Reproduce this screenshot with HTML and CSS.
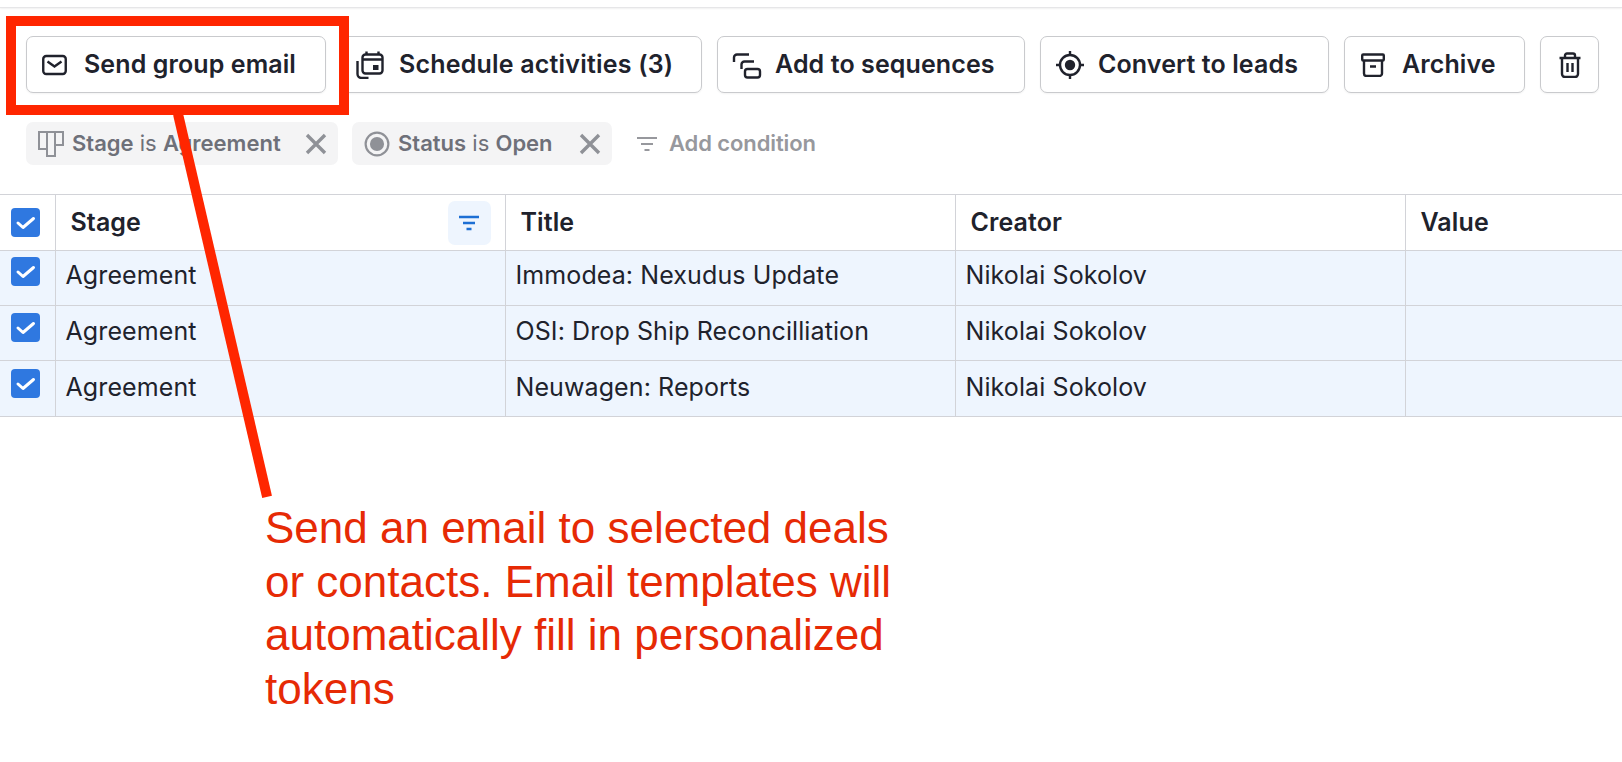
FILE: index.html
```html
<!DOCTYPE html>
<html lang="en">
<head>
    <meta charset="UTF-8">
    <meta name="viewport" content="width=device-width, initial-scale=1.0">
    <title>Deals</title>
    <link rel="stylesheet" href="styles.css">
</head>
<body>
    <div class="topline"></div>
    <div class="actions">
        <button class="btn btn-email">
            <svg class="icon" width="25" height="24" viewBox="0 0 25 24"><rect x="1.250" y="3" width="22.500" height="18" rx="3"/><path d="M5.500 8.500l7 5 7-5"/></svg>
            <span>Send group email</span>
        </button>
        <button class="btn btn-schedule">
            <svg class="icon" width="28" height="28" viewBox="0 0 28 28"><rect x="6.500" y="3.500" width="20" height="19" rx="3"/><path d="M6.500 8.500h20M10.500 .5V4M22.500 .5V4M1.500 10v13a4 4 0 0 0 4 4h7"/><rect x="17" y="14" width="5.500" height="5" class="solid"/></svg>
            <span>Schedule activities (3)</span>
        </button>
        <button class="btn btn-seq">
            <svg class="icon" width="30" height="28" viewBox="0 0 30 28"><path d="M17 3.500H5a3 3 0 0 0-3 3V11"/><path d="M22 10.500H12.500a3 3 0 0 0-3 3V18"/><rect x="13" y="18" width="15" height="8.500" rx="2.500"/></svg>
            <span>Add to sequences</span>
        </button>
        <button class="btn btn-leads">
            <svg class="icon" width="30" height="30" viewBox="0 0 30 30"><circle cx="15" cy="15" r="10"/><circle cx="15" cy="15" r="5.200" class="solid"/><path d="M15 1v4M15 25v4M1 15h4M25 15h4"/></svg>
            <span>Convert to leads</span>
        </button>
        <button class="btn btn-archive">
            <svg class="icon" width="24" height="24" viewBox="0 0 24 24"><rect x="1.200" y="1.500" width="21.600" height="6" rx="1"/><path d="M3 7.500v13a2.500 2.500 0 0 0 2.500 2.500h13a2.500 2.500 0 0 0 2.500-2.500v-13M9 13.500h6"/></svg>
            <span>Archive</span>
        </button>
        <button class="btn btn-trash" aria-label="Delete">
            <svg class="icon" width="24" height="26" viewBox="0 0 24 26"><path d="M1.500 6h21M7 6V3.500a2 2 0 0 1 2-2h6a2 2 0 0 1 2 2V6M4 6v16a3 3 0 0 0 3 3h10a3 3 0 0 0 3-3V6M9.500 11v9M14.500 11v9"/></svg>
        </button>
    </div>

    <div class="filters">
        <div class="chip chip-stage">
            <svg class="chip-icon" viewBox="0 0 26 26"><path d="M1 1h24v13h-8v11H9v-7H1zM9 1v17M17 1v13"/></svg>
            <span class="chip-text"><b>Stage</b> is <b>Agreement</b></span>
            <svg class="chip-x" viewBox="0 0 24 24"><path d="M3 3l18 18M21 3L3 21"/></svg>
        </div>
        <div class="chip chip-status">
            <svg class="chip-icon" viewBox="0 0 24 24"><circle cx="12" cy="12" r="10.500"/><circle cx="12" cy="12" r="6.500" class="chip-dot"/></svg>
            <span class="chip-text"><b>Status</b> is <b>Open</b></span>
            <svg class="chip-x" viewBox="0 0 24 24"><path d="M3 3l18 18M21 3L3 21"/></svg>
        </div>
        <div class="add-condition">
            <svg class="filter-icon" viewBox="0 0 24 24"><path d="M2 6h20M6 12h12M9.500 18h5"/></svg>
            <span>Add condition</span>
        </div>
    </div>

    <table class="deals">
        <thead>
            <tr>
                <th class="col-check"><span class="check"><svg viewBox="0 0 29 29"><path d="M7 15l5 4.500 10.500-9"/></svg></span></th>
                <th class="col-stage">
                    <div class="th-inner">
                        <span class="th-label">Stage</span>
                        <span class="sort"><svg viewBox="0 0 24 24"><path d="M2 6h20M6 12h12M9.500 18h5"/></svg></span>
                    </div>
                </th>
                <th class="col-title">Title</th>
                <th class="col-creator">Creator</th>
                <th class="col-value">Value</th>
            </tr>
        </thead>
        <tbody>
            <tr>
                <td class="col-check"><span class="check"><svg viewBox="0 0 29 29"><path d="M7 15l5 4.500 10.500-9"/></svg></span></td>
                <td>Agreement</td>
                <td>Immodea: Nexudus Update</td>
                <td>Nikolai Sokolov</td>
                <td></td>
            </tr>
            <tr>
                <td class="col-check"><span class="check"><svg viewBox="0 0 29 29"><path d="M7 15l5 4.500 10.500-9"/></svg></span></td>
                <td>Agreement</td>
                <td>OSI: Drop Ship Reconcilliation</td>
                <td>Nikolai Sokolov</td>
                <td></td>
            </tr>
            <tr>
                <td class="col-check"><span class="check"><svg viewBox="0 0 29 29"><path d="M7 15l5 4.500 10.500-9"/></svg></span></td>
                <td>Agreement</td>
                <td>Neuwagen: Reports</td>
                <td>Nikolai Sokolov</td>
                <td></td>
            </tr>
        </tbody>
    </table>

    <!-- red annotation drawn on top of the screenshot -->
    <div class="note-box"></div>
    <div class="note-line"></div>
    <p class="note-text">Send an email to selected deals or contacts. Email templates will automatically fill in personalized tokens</p>
</body>
</html>
```

FILE: styles.css
```css
body {
    font-family: 'Inter', sans-serif;
    margin: 0;
    padding: 0;
    background-color: #fff;
    color: #20222c;
    position: relative;
    height: 762px;
    overflow: hidden;
}
.topline {
    height: 7px;
    border-bottom: 1px solid #e6e6e8;
    box-shadow: 0 1px 2px rgba(0, 0, 0, 0.06);
}
.actions {
    display: flex;
    gap: 15px;
    padding: 28px 0 0 26px;
}
.btn {
    display: flex;
    align-items: center;
    gap: 14px;
    height: 57px;
    padding: 0 0 0 14px;
    box-sizing: border-box;
    background-color: #fff;
    border: 1px solid #c9cacd;
    border-radius: 7px;
    box-shadow: 0 1px 2px rgba(0, 0, 0, 0.05);
    font-family: inherit;
    font-size: 25px;
    font-weight: 600;
    letter-spacing: 0.1px;
    color: #20222c;
}
.btn span { margin-bottom: 2px; }
.btn-email { width: 300px; padding-left: 15px; gap: 17px; }
.btn-schedule { width: 361px; gap: 15px; letter-spacing: 0.2px; }
.btn-seq { width: 308px; gap: 13px; }
.btn-leads { width: 289px; gap: 13px; }
.btn-archive { width: 181px; padding-left: 16px; gap: 17px; }
.btn-trash { width: 59px; padding: 0; justify-content: center; }
.icon {
    flex: none;
    fill: none;
    stroke: #20222c;
    stroke-width: 2.4;
}
.icon .solid { fill: #20222c; stroke: none; }
.filters {
    display: flex;
    align-items: center;
    gap: 14px;
    padding: 29px 0 0 26px;
}
.chip {
    display: flex;
    align-items: center;
    height: 43px;
    padding: 0 10px 0 12px;
    box-sizing: border-box;
    background-color: #f4f4f5;
    border-radius: 7px;
    font-size: 22px;
    color: #6e7079;
}
.chip-stage { width: 312px; }
.chip-status { width: 260px; }
.chip-text { flex: 1; margin: 0 0 2px 8px; white-space: nowrap; }
.chip-text b { font-weight: 600; }
.chip-icon {
    width: 26px;
    height: 26px;
    fill: none;
    stroke: #8f9197;
    stroke-width: 2;
}
.chip-icon .chip-dot { fill: #8f9197; stroke: none; }
.chip-x {
    width: 24px;
    height: 24px;
    fill: none;
    stroke: #8f9197;
    stroke-width: 3.4;
}
.add-condition {
    display: flex;
    align-items: center;
    gap: 10px;
    margin-left: 9px;
    font-size: 22px;
    font-weight: 600;
    letter-spacing: -0.1px;
    color: #97989d;
}
.add-condition span { margin-bottom: 2px; }
.filter-icon {
    width: 24px;
    height: 24px;
    fill: none;
    stroke: #97989d;
    stroke-width: 2.2;
}
.deals {
    position: absolute;
    top: 194px;
    left: 0;
    width: 1622px;
    table-layout: fixed;
    border-collapse: collapse;
    font-size: 25px;
    letter-spacing: 0.1px;
}
.deals th, .deals td {
    border: 1px solid #d2d3d8;
    padding: 0 0 4px 10px;
    text-align: left;
    box-sizing: border-box;
}
.deals tr > :first-child { border-left: none; }
.deals tr > :last-child { border-right: none; }
.deals th {
    height: 56px;
    font-size: 25px;
    font-weight: 600;
    padding: 0 0 2px 15px;
}
.deals td {
    height: 55px;
    background-color: #eef5fe;
    color: #20222c;
}
.deals tbody tr:first-child td { padding-bottom: 6px; }
.deals tbody tr:last-child td { height: 56px; }
.deals th.col-stage { padding-bottom: 0; }
.deals .col-check { width: 55px; padding: 0 0 0 11px; vertical-align: top; }
.col-stage { width: 450px; }
.col-title { width: 450px; }
.col-creator { width: 450px; }
.th-inner {
    display: flex;
    align-items: center;
    justify-content: space-between;
    padding-right: 14px;
}
.th-label { margin-bottom: 2px; }
.sort {
    display: flex;
    align-items: center;
    justify-content: center;
    width: 43px;
    height: 44px;
    background-color: #eef5fe;
    border-radius: 7px;
}
.sort svg {
    width: 24px;
    height: 24px;
    fill: none;
    stroke: #1d6fd4;
    stroke-width: 2.6;
}
.check {
    display: block;
    width: 29px;
    height: 29px;
    margin-top: 6px;
    background-color: #2f78e0;
    border-radius: 4px;
}
thead .check { margin-top: 13px; }
tbody tr:nth-child(2) .check { margin-top: 7px; }
tbody tr:nth-child(3) .check { margin-top: 8px; }
.check svg {
    display: block;
    width: 29px;
    height: 29px;
    fill: none;
    stroke: #fff;
    stroke-width: 3;
    stroke-linecap: round;
    stroke-linejoin: round;
}
.note-box {
    position: absolute;
    left: 6px;
    top: 16px;
    width: 343px;
    height: 99px;
    box-sizing: border-box;
    border: 10px solid #ff2600;
}
.note-line {
    position: absolute;
    left: 173px;
    top: 114px;
    width: 10px;
    height: 393px;
    background-color: #ff2600;
    transform-origin: top center;
    transform: rotate(-13.1deg);
}
.note-text {
    position: absolute;
    left: 265px;
    top: 501px;
    width: 640px;
    margin: 0;
    font-family: 'Liberation Sans', Arial, sans-serif;
    font-size: 44px;
    line-height: 53.5px;
    color: #e62a05;
}
```
